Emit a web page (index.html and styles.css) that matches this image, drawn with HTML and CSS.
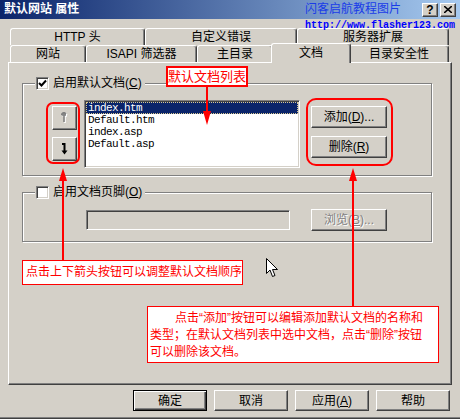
FILE: index.html
```html
<!DOCTYPE html>
<html lang="zh-CN">
<head>
    <meta charset="UTF-8">
    <title>默认网站 属性</title>
    <link rel="stylesheet" href="styles.css">
</head>
<body>
    <div class="dialog">
        <!-- Title Bar -->
        <div class="title-bar">
            <div class="title-text">默认网站 属性</div>
            <div class="title-buttons">
                <div class="title-button help">?</div>
                <div class="title-button">
                    <svg width="8" height="7" viewBox="0 0 8 7"><path d="M0 0 L8 7 M8 0 L0 7" stroke="#000" stroke-width="1.6"/></svg>
                </div>
            </div>
        </div>

        <!-- Tabs -->
        <div class="tabs">
            <div class="tab-row">
                <div class="tab tab-http">HTTP 头</div>
                <div class="tab tab-errors">自定义错误</div>
                <div class="tab tab-ext">服务器扩展</div>
            </div>
            <div class="tab-row">
                <div class="tab tab-site">网站</div>
                <div class="tab tab-isapi">ISAPI 筛选器</div>
                <div class="tab tab-home">主目录</div>
                <div class="tab tab-docs active">文档</div>
                <div class="tab tab-security">目录安全性</div>
            </div>
        </div>

        <!-- Documents Page -->
        <div class="panel">
            <fieldset class="group group-docs">
                <legend>
                    <span class="checkbox">
                        <svg width="9" height="9" viewBox="0 0 9 9"><path d="M1 4 L3.5 6.5 L8 1.5" fill="none" stroke="#000" stroke-width="2"/></svg>
                    </span>
                    <span>启用默认文档(<u>C</u>)</span>
                </legend>
                <div class="group-body">
                    <div class="order-buttons">
                        <div class="small-button">
                            <svg width="7" height="12" viewBox="0 0 7 12">
                                <path d="M4 2 L4 11 M1 4 L4 1 L6 3 M2 4 L6 4" fill="none" stroke="#fff" stroke-width="1.6"/>
                                <path d="M3 1 L3 10 M0 3 L3 0 L5 2 M1 3 L5 3" fill="none" stroke="#808080" stroke-width="1.6"/>
                            </svg>
                        </div>
                        <div class="small-button">
                            <svg width="7" height="12" viewBox="0 0 7 12">
                                <path d="M1 1 L3.5 1 L3.5 8" fill="none" stroke="#000" stroke-width="2"/>
                                <path d="M0.5 7.5 L6.5 7.5 L3.5 11.5 Z" fill="#000"/>
                            </svg>
                        </div>
                    </div>
                    <div class="doc-list">
                        <div class="doc-item selected">index.htm</div>
                        <div class="doc-item">Default.htm</div>
                        <div class="doc-item">index.asp</div>
                        <div class="doc-item">Default.asp</div>
                    </div>
                    <div class="side-buttons">
                        <div class="button">添加(<u>D</u>)...</div>
                        <div class="button">删除(<u>R</u>)</div>
                    </div>
                </div>
            </fieldset>

            <fieldset class="group group-footer">
                <legend>
                    <span class="checkbox"></span>
                    <span>启用文档页脚(<u>O</u>)</span>
                </legend>
                <div class="group-body footer-body">
                    <div class="text-input"></div>
                    <div class="button disabled">浏览(<u>B</u>)...</div>
                </div>
            </fieldset>
        </div>

        <!-- Dialog Buttons -->
        <div class="dialog-buttons">
            <div class="button wide default">确定</div>
            <div class="button wide">取消</div>
            <div class="button wide">应用(<u>A</u>)</div>
            <div class="button wide">帮助</div>
        </div>

        <!-- Watermark -->
        <div class="watermark">
            <div class="watermark-name">闪客启航教程图片</div>
            <div class="watermark-url">http://www.flasher123.com</div>
        </div>

        <!-- Annotations -->
        <svg class="marks" width="460" height="419" viewBox="0 0 460 419">
            <rect x="47" y="103" width="32" height="60" rx="6" fill="none" stroke="#f00" stroke-width="2"/>
            <rect x="307" y="99" width="85" height="66" rx="9" fill="none" stroke="#f00" stroke-width="2"/>
            <path d="M207 87 L207 113 M63 260 L63 179 M353 306 L353 179" stroke="#f00" stroke-width="2"/>
            <path d="M203 111 L211 111 L207 125 Z M59 181 L67 181 L63 168 Z M349 181 L357 181 L353 168 Z" fill="#f00"/>
        </svg>
        <div class="note note-list">默认文档列表</div>
        <div class="note note-order">点击上下箭头按钮可以调整默认文档顺序</div>
        <div class="note note-edit">点击“添加”按钮可以编辑添加默认文档的名称和<br>类型；在默认文档列表中选中文档，点击“删除”按钮<br>可以删除该文档。</div>

        <svg class="cursor" width="13" height="20" viewBox="0 0 13 20">
            <path d="M0.5 0.5 L0.5 15.5 L4 12 L6.5 18.5 L9 17.5 L6.5 11.5 L11.5 11.5 Z" fill="#fff" stroke="#000" stroke-width="1"/>
        </svg>
    </div>
</body>
</html>
```

FILE: styles.css
```css
* {
    margin: 0;
    padding: 0;
    box-sizing: border-box;
}

body {
    background-color: #d4d0c8;
    font-family: "Liberation Sans", "Noto Sans CJK SC", sans-serif;
    font-size: 12px;
    color: #000;
}

.dialog {
    position: relative;
    width: 460px;
    height: 419px;
    border-bottom: 1px solid #404040;
    box-shadow: inset 0 -1px #808080;
    overflow: hidden;
}

/* Title Bar */
.title-bar {
    height: 19px;
    display: flex;
    align-items: center;
    justify-content: space-between;
    padding: 0 4px 0 4px;
    background: linear-gradient(to right, #0a246a, #a6caf0);
}

.title-text {
    color: #fff;
    font-weight: bold;
    font-size: 12px;
    line-height: 19px;
}

.title-buttons {
    display: flex;
    gap: 2px;
}

.title-button {
    width: 16px;
    height: 14px;
    display: flex;
    align-items: center;
    justify-content: center;
    background-color: #d4d0c8;
    border: 1px solid;
    border-color: #fff #404040 #404040 #fff;
    box-shadow: inset -1px -1px #808080;
}

.title-button.help {
    font-family: "Liberation Sans", sans-serif;
    font-weight: bold;
    font-size: 12px;
    line-height: 12px;
}

/* Tabs */
.tabs {
    margin: 9px 0 0 10px;
}

.tab-row {
    display: flex;
    height: 17px;
}

.tab {
    height: 17px;
    display: flex;
    align-items: center;
    justify-content: center;
    line-height: 14px;
    background-color: #d4d0c8;
    border-top: 1px solid #fff;
    border-left: 1px solid #fff;
    border-right: 1px solid #404040;
    box-shadow: inset -1px 0 #808080;
    border-radius: 3px 3px 0 0;
}

.tab-http { width: 135px; }
.tab-errors { width: 152px; }
.tab-ext { width: 152px; }
.tab-site { width: 76px; }
.tab-isapi { width: 111px; }
.tab-home { width: 76px; }
.tab-docs { width: 76px; }
.tab-security { width: 100px; }

.tab.active {
    position: relative;
    z-index: 2;
    width: 80px;
    height: 20px;
    margin: -2px -2px 0;
    padding-bottom: 2px;
}

/* Panel */
.panel {
    margin-left: 8px;
    width: 444px;
    height: 323px;
    padding: 14px 0 0 13px;
    border: 1px solid;
    border-color: #fff #404040 #404040 #fff;
    box-shadow: inset -1px -1px #808080;
}

.group {
    width: 410px;
    border: 1px solid #808080;
    box-shadow: inset 1px 1px #fff, 1px 1px #fff;
}

.group-footer {
    margin-top: 10px;
}

.group legend {
    display: flex;
    align-items: center;
    gap: 4px;
    height: 13px;
    line-height: 13px;
    margin-left: 12px;
    padding: 0 3px 0 1px;
    background-color: #d4d0c8;
}

.checkbox {
    width: 13px;
    height: 13px;
    display: flex;
    align-items: center;
    justify-content: center;
    background-color: #fff;
    border: 1px solid;
    border-color: #808080 #fff #fff #808080;
    box-shadow: inset 1px 1px #404040, inset -1px -1px #d4d0c8;
}

.group-body {
    display: flex;
    align-items: flex-start;
    padding: 10px 0 7px;
}

.order-buttons {
    display: flex;
    flex-direction: column;
    gap: 7px;
    margin: 6px 0 0 29px;
}

.small-button {
    width: 25px;
    height: 24px;
    display: flex;
    align-items: center;
    justify-content: center;
    border: 1px solid;
    border-color: #fff #404040 #404040 #fff;
    box-shadow: inset -1px -1px #808080;
}

.doc-list {
    width: 216px;
    height: 68px;
    margin-left: 7px;
    padding: 1px;
    background-color: #fff;
    border: 1px solid;
    border-color: #808080 #fff #fff #808080;
    box-shadow: inset 1px 1px #404040, inset -1px -1px #d4d0c8;
    font-family: "Liberation Mono", monospace;
    font-size: 11px;
    letter-spacing: -0.6px;
}

.doc-item {
    height: 12px;
    line-height: 12px;
    padding-left: 2px;
}

.doc-item.selected {
    background-color: #0a246a;
    color: #fff;
    outline: 1px dotted #d8c890;
    outline-offset: -1px;
}

.side-buttons {
    display: flex;
    flex-direction: column;
    gap: 8px;
    margin: 6px 0 0 11px;
}

.button {
    width: 76px;
    height: 22px;
    display: flex;
    align-items: center;
    justify-content: center;
    line-height: 14px;
    border: 1px solid;
    border-color: #fff #404040 #404040 #fff;
    box-shadow: inset -1px -1px #808080;
}

.button.disabled {
    color: #808080;
    text-shadow: 1px 1px #fff;
}

.footer-body {
    align-items: center;
    padding: 10px 0 10px;
}

.text-input {
    width: 204px;
    height: 20px;
    margin: 0 21px 0 63px;
    border: 1px solid;
    border-color: #808080 #fff #fff #808080;
    box-shadow: inset 1px 1px #404040, inset -1px -1px #d4d0c8;
}

/* Dialog Buttons */
.dialog-buttons {
    display: flex;
    justify-content: flex-end;
    gap: 7px;
    margin-top: 5px;
    padding-right: 10px;
}

.button.wide {
    width: 74px;
    height: 21px;
}

.button.default {
    border-color: #000;
    box-shadow: inset 1px 1px #fff, inset -1px -1px #404040, inset -2px -2px #808080;
}

/* Watermark */
.watermark {
    position: absolute;
    left: 305px;
    top: 2px;
    color: #1a3ce8;
}

.watermark-name {
    font-size: 12px;
    line-height: 15px;
}

.watermark-url {
    margin-top: 3px;
    font-family: "Liberation Mono", monospace;
    font-size: 10px;
    font-weight: bold;
    line-height: 11px;
    color: #0000ff;
}

/* Annotations */
.marks {
    position: absolute;
    left: 0;
    top: 0;
    z-index: 5;
}

.note {
    position: absolute;
    z-index: 6;
    background-color: #fff;
    border: 1px solid #f00;
    color: #f00;
    white-space: nowrap;
}

.note-list {
    left: 166px;
    top: 66px;
    width: 82px;
    height: 21px;
    border-width: 2px;
    font-size: 13px;
    line-height: 17px;
    text-align: center;
}

.note-order {
    left: 22px;
    top: 260px;
    width: 221px;
    height: 25px;
    padding-left: 3px;
    line-height: 23px;
}

.note-edit {
    left: 147px;
    top: 306px;
    width: 292px;
    height: 57px;
    padding: 3px 2px 0;
    line-height: 17px;
    text-indent: 25px;
}

.cursor {
    position: absolute;
    left: 266px;
    top: 258px;
    z-index: 7;
}
```
